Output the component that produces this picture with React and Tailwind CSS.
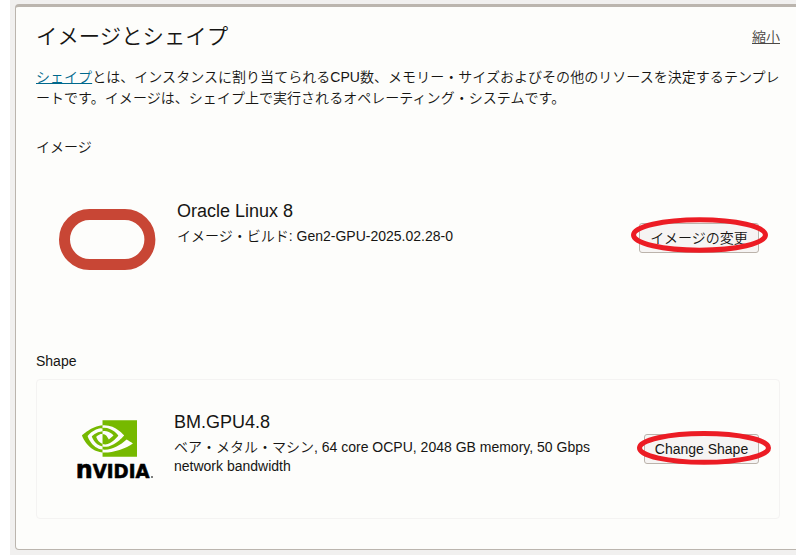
import React from "react";
import { SiNvidia } from "react-icons/si";

function OracleLogo() {
  return (
    <svg width="98" height="63" viewBox="0 0 98 63" className="block shrink-0">
      <rect x="6.5" y="6.5" width="85.4" height="50" rx="25" fill="none" stroke="#c84635" strokeWidth="11" />
    </svg>
  );
}

function NvidiaLogo() {
  return (
    <div className="w-[78px] shrink-0">
      <div className="ml-[6px] h-[37px] overflow-hidden">
        <SiNvidia size={55} color="#76b900" className="-mt-[9px] block" />
      </div>
      <svg width="78" height="28" viewBox="0 0 78 28" className="block overflow-visible" fontFamily="'DejaVu Sans', sans-serif" fontWeight="700">
        <text transform="scale(0.955 1)" x="-0.2" y="20.6" fontSize="19" stroke="#000" strokeWidth="0.6">
          <tspan fontSize="25">n</tspan>VIDIA
        </text>
        <circle cx="76" cy="19.9" r="1" fill="#555" />
      </svg>
    </div>
  );
}

function ActionButton({ children, width, ring }) {
  return (
    <div className="relative shrink-0">
      <button className={`flex h-[30px] items-center justify-center rounded-[3px] border border-[#bbb3ab] bg-[#f6f4f3] text-sm ${width}`}>
        {children}
      </button>
      {ring}
    </div>
  );
}

export default function App() {
  return (
    <div className="h-[555px] w-[796px] overflow-hidden bg-white pl-[10px] font-['Liberation_Sans','Noto_Sans_CJK_JP',sans-serif] text-sm font-[350] text-[#161513]">
      <div className="h-full bg-[#f1f0ef] pt-1 pl-[5px]">
        <section className="h-[546px] w-[800px] rounded-[4px] border border-t-[3px] border-[#bbb5ae] bg-[#fdfdfb] pl-5">
          <div className="w-[744px]">
            <header className="flex h-[60px] items-center justify-between">
              <h2 className="text-[21.4px] leading-8 font-[350]">イメージとシェイプ</h2>
              <a className="text-[#4b4845] underline">縮小</a>
            </header>
            <p className="h-[70px] leading-[21px] tracking-[0.04px] whitespace-nowrap">
              <a className="text-[#00688c] underline">シェイプ</a>
              とは、インスタンスに割り当てられるCPU数、メモリー・サイズおよびその他のリソースを決定するテンプレ<br />
              ートです。イメージは、シェイプ上で実行されるオペレーティング・システムです。
            </p>
            <h3 className="h-5 leading-5 font-[350]">イメージ</h3>
            <div className="flex h-[194px] pt-[42px] pl-[22px]">
              <div className="pt-[9px]"><OracleLogo /></div>
              <div className="w-[482px] pl-[21px]">
                <div className="text-lg leading-6">Oracle Linux 8</div>
                <div className="mt-[3px] leading-5">イメージ・ビルド: Gen2-GPU-2025.02.28-0</div>
              </div>
              <div className="ml-[1px] pt-[24px]">
                <ActionButton
                  width="w-[120px]"
                  ring={
                    <svg width="138" height="38" viewBox="0 0 138 38" className="absolute -top-[7px] -left-[9px]">
                      <ellipse cx="69.5" cy="19" rx="66" ry="15.2" fill="none" stroke="#ec1c24" strokeWidth="5" />
                    </svg>
                  }
                >
                  イメージの変更
                </ActionButton>
              </div>
            </div>
            <h3 className="h-[28px] leading-5">Shape</h3>
            <div className="flex h-[140px] rounded-[4px] border border-[#f4f3f2] pt-[30px] pl-[39px]">
              <div className="pt-[10px]"><NvidiaLogo /></div>
              <div className="w-[490px] pl-5">
                <div className="text-lg leading-6">BM.GPU4.8</div>
                <div className="mt-1 leading-[19px]">
                  ベア・メタル・マシン, 64 core OCPU, 2048 GB memory, 50 Gbps<br />network bandwidth
                </div>
              </div>
              <div className="pt-6">
                <ActionButton
                  width="w-[115px]"
                  ring={
                    <svg width="136" height="36" viewBox="0 0 136 36" className="absolute -top-[4px] -left-[8px]">
                      <ellipse cx="68" cy="17.9" rx="64.5" ry="14.4" fill="none" stroke="#ec1c24" strokeWidth="5" />
                    </svg>
                  }
                >
                  Change Shape
                </ActionButton>
              </div>
            </div>
          </div>
        </section>
      </div>
    </div>
  );
}
